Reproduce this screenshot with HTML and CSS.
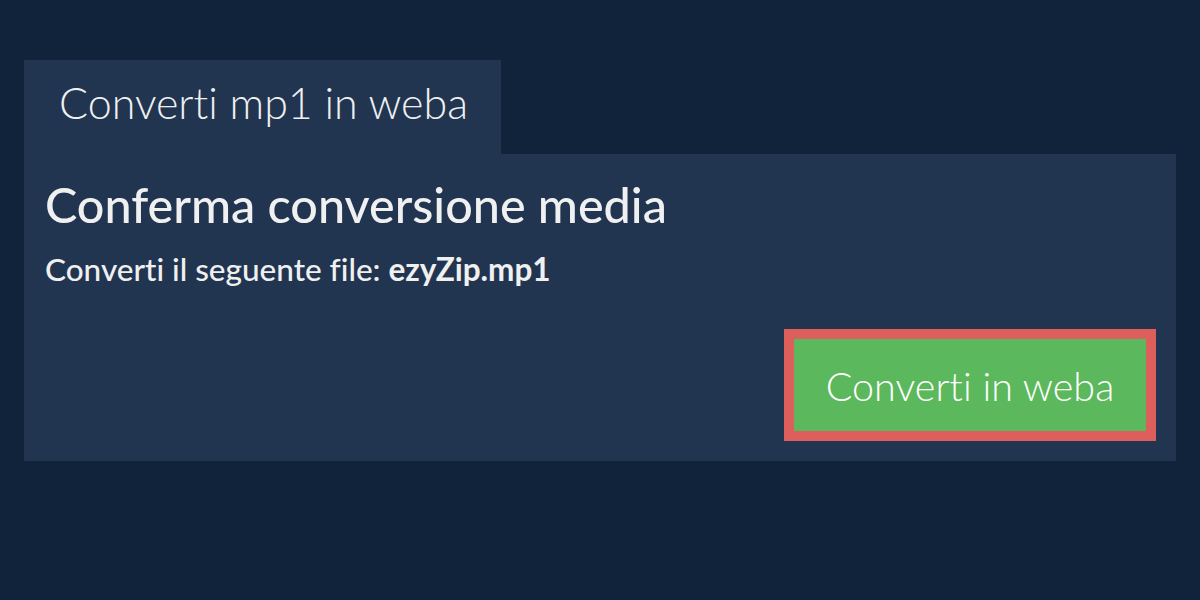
FILE: index.html
```html
<!DOCTYPE html>
<html lang="it">
<head>
<meta charset="utf-8">
<title>Converti mp1 in weba</title>
<link rel="stylesheet" href="styles.css">
</head>
<body>
<main class="page">
  <div class="tab">Converti mp1 in weba</div>
  <section class="panel">
    <h1 class="title">Conferma conversione media</h1>
    <p class="desc">Converti il seguente file: <strong>ezyZip.mp1</strong></p>
    <div class="actions">
      <button class="convert">Converti in weba</button>
    </div>
  </section>
</main>
</body>
</html>
```
FILE: styles.css
```css
html, body {
  margin: 0;
  padding: 0;
  background: #11233a;
  font-family: "Lato", "Open Sans", sans-serif;
  color: #f0f0f0;
  font-variant-ligatures: none;
}
.page {
  padding: 60px 24px 0 24px;
  display: flex;
  flex-direction: column;
  align-items: flex-start;
}
.tab {
  width: 477px;
  height: 94px;
  box-sizing: border-box;
  background: #213550;
  padding: 18px 0 0 35px;
  font-size: 43px;
  font-weight: 300;
  line-height: 50px;
}
.panel {
  align-self: stretch;
  height: 307px;
  box-sizing: border-box;
  background: #213550;
  padding: 20px 20px 0 21px;
  display: flex;
  flex-direction: column;
}
.title {
  margin: 0;
  font-size: 48.5px;
  font-weight: 500;
  line-height: 60px;
}
.desc {
  margin: 16px 0 0 0;
  font-size: 31.5px;
  font-weight: 500;
  line-height: 38px;
}
.desc strong {
  font-weight: 700;
}
.actions {
  display: flex;
  justify-content: flex-end;
  margin-top: 41px;
}
.convert {
  width: 372px;
  height: 112px;
  box-sizing: border-box;
  border: 10px solid #dc5f5c;
  background: #5cb85c;
  color: #ffffff;
  font-family: "Lato", "Open Sans", sans-serif;
  font-variant-ligatures: none;
  font-size: 39.5px;
  font-weight: 300;
  padding: 0;
  cursor: pointer;
}
```
